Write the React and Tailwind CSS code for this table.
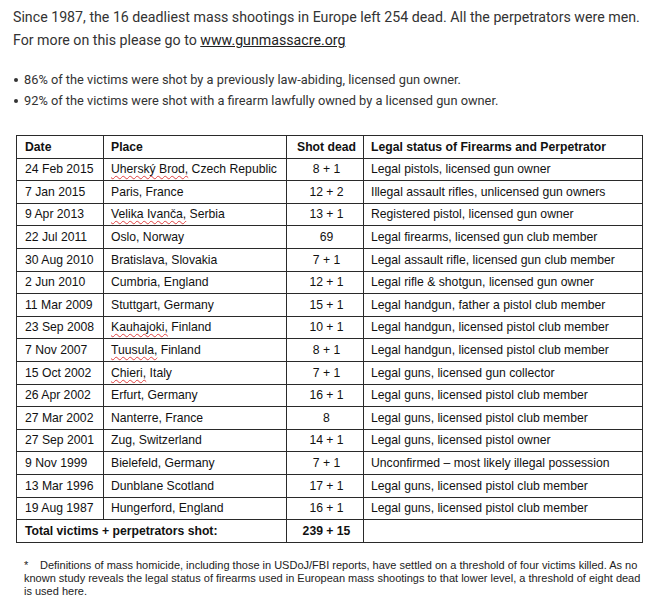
import React from "react";

const rows = [
  ["24 Feb 2015", [["Uherský Brod,", true], [" Czech Republic", false]], "8 + 1", "Legal pistols, licensed gun owner"],
  ["7 Jan 2015", [["Paris, France", false]], "12 + 2", "Illegal assault rifles, unlicensed gun owners"],
  ["9 Apr 2013", [["Velika Ivanča,", true], [" Serbia", false]], "13 + 1", "Registered pistol, licensed gun owner"],
  ["22 Jul 2011", [["Oslo, Norway", false]], "69", "Legal firearms, licensed gun club member"],
  ["30 Aug 2010", [["Bratislava, Slovakia", false]], "7 + 1", "Legal assault rifle, licensed gun club member"],
  ["2 Jun 2010", [["Cumbria, England", false]], "12 + 1", "Legal rifle & shotgun, licensed gun owner"],
  ["11 Mar 2009", [["Stuttgart, Germany", false]], "15 + 1", "Legal handgun, father a pistol club member"],
  ["23 Sep 2008", [["Kauhajoki,", true], [" Finland", false]], "10 + 1", "Legal handgun, licensed pistol club member"],
  ["7 Nov 2007", [["Tuusula,", true], [" Finland", false]], "8 + 1", "Legal handgun, licensed pistol club member"],
  ["15 Oct 2002", [["Chieri,", true], [" Italy", false]], "7 + 1", "Legal guns, licensed gun collector"],
  ["26 Apr 2002", [["Erfurt, Germany", false]], "16 + 1", "Legal guns, licensed pistol club member"],
  ["27 Mar 2002", [["Nanterre, France", false]], "8", "Legal guns, licensed pistol club member"],
  ["27 Sep 2001", [["Zug, Switzerland", false]], "14 + 1", "Legal guns, licensed pistol owner"],
  ["9 Nov 1999", [["Bielefeld, Germany", false]], "7 + 1", "Unconfirmed – most likely illegal possession"],
  ["13 Mar 1996", [["Dunblane Scotland", false]], "17 + 1", "Legal guns, licensed pistol club member"],
  ["19 Aug 1987", [["Hungerford, England", false]], "16 + 1", "Legal guns, licensed pistol club member"],
];

const cell = "border border-[#2a2a2a] pl-[7px] pr-[4px] py-0 h-[22.6px] align-middle whitespace-nowrap";

export default function App() {
  return (
    <div className="w-[653px] h-[616px] bg-white overflow-hidden">
      <div className="pl-[13px] pt-[6px] text-[14.2px] leading-[23px] text-[#333] whitespace-nowrap" style={{ fontFamily: "Roboto, sans-serif" }}>
        <p>Since 1987, the 16 deadliest mass shootings in Europe left 254 dead. All the perpetrators were men.</p>
        <p>
          For more on this please go to <span className="underline text-[#222]">www.gunmassacre.org</span>
        </p>
      </div>
      <ul className="mt-[17px] pl-[14px] text-[12.8px] leading-[21px] text-[#333]" style={{ fontFamily: "Roboto, sans-serif" }}>
        <li className="flex items-center">
          <span className="w-[4px] h-[4px] rounded-full bg-[#333] mr-[6px]"></span>
          86% of the victims were shot by a previously law-abiding, licensed gun owner.
        </li>
        <li className="flex items-center">
          <span className="w-[4px] h-[4px] rounded-full bg-[#333] mr-[6px]"></span>
          92% of the victims were shot with a firearm lawfully owned by a licensed gun owner.
        </li>
      </ul>
      <div className="pl-[16px] mt-[24px]">
        <table
          className="border-collapse text-[12.2px] text-[#111] w-[626px] table-fixed"
          style={{ fontFamily: "'Liberation Sans', Arial, sans-serif" }}
        >
          <colgroup>
            <col className="w-[87px]" />
            <col className="w-[183px]" />
            <col className="w-[77px]" />
            <col className="w-[279px]" />
          </colgroup>
          <thead>
            <tr className="font-bold">
              <td className={cell + " pl-[8px]"}>Date</td>
              <td className={cell}>Place</td>
              <td className={cell + " text-center pl-[4px]"}>Shot dead</td>
              <td className={cell}>Legal status of Firearms and Perpetrator</td>
            </tr>
          </thead>
          <tbody>
            {rows.map((r, i) => (
              <tr key={i}>
                <td className={cell + " pl-[8px]"}>{r[0]}</td>
                <td className={cell}>
                  {r[1].map((p, j) =>
                    p[1] ? (
                      <span key={j} className="underline decoration-wavy decoration-[#e04040] decoration-[1px] underline-offset-[2px]">
                        {p[0]}
                      </span>
                    ) : (
                      <span key={j}>{p[0]}</span>
                    )
                  )}
                </td>
                <td className={cell + " text-center pl-[4px]"}>{r[2]}</td>
                <td className={cell}>{r[3]}</td>
              </tr>
            ))}
            <tr className="font-bold">
              <td className={cell + " pl-[8px]"} colSpan={2}>Total victims + perpetrators shot:</td>
              <td className={cell + " text-center pl-[4px]"}>239 + 15</td>
              <td className={cell}></td>
            </tr>
          </tbody>
        </table>
      </div>
      <p
        className="mt-[16px] pl-[24px] pr-[10px] text-[11px] leading-[13px] text-[#222]"
        style={{ fontFamily: "'Liberation Sans', Arial, sans-serif" }}
      >
        <span className="inline-block w-[16px]">*</span>Definitions of mass homicide, including those in USDoJ/FBI reports, have settled on a threshold of four victims killed. As no known study reveals the legal status of firearms used in European mass shootings to that lower level, a threshold of eight dead is used here.
      </p>
    </div>
  );
}
